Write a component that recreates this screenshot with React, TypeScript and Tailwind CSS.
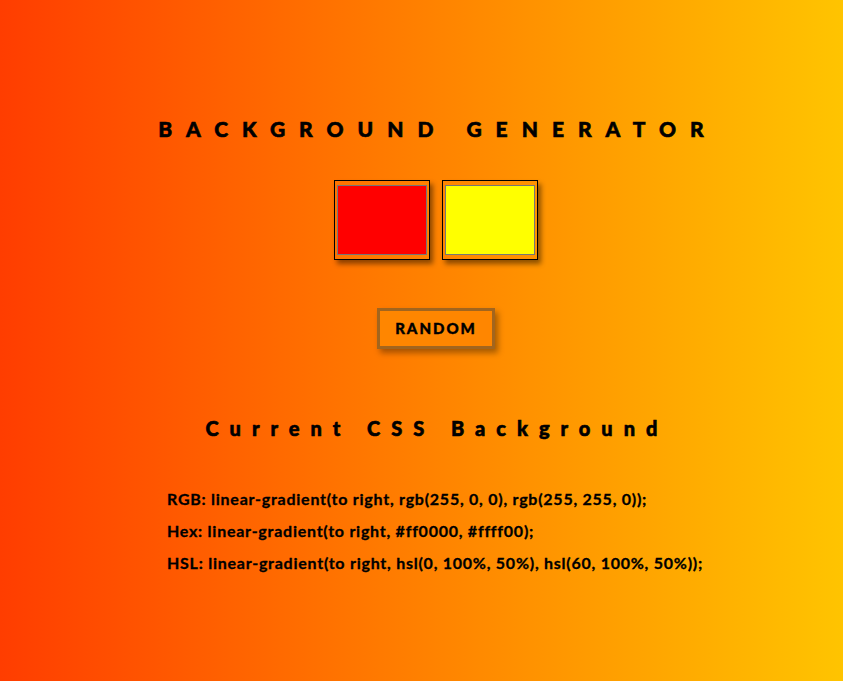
import React from "react";

export default function App() {
  const font = { fontFamily: "Lato, 'Liberation Sans', sans-serif" };
  return (
    <div
      className="w-[843px] h-[681px] bg-[linear-gradient(to_right,#ff3d00,#ffc400)] text-black overflow-hidden"
      style={font}
    >
      <div className="pl-[29px] flex flex-col items-center">
        <h1 className="mt-[115px] text-[21px] leading-[28px] font-black tracking-[14px] uppercase pl-[4px] [-webkit-text-stroke:0.6px_black]">
          Background Generator
        </h1>
        <div className="mt-[37px] flex gap-[12px]">
          <div className="w-[96px] h-[80px] border border-black px-[2px] py-[4px] shadow-[3px_4px_5px_rgba(0,0,0,0.45)]">
            <div className="w-full h-full border border-[#777] bg-[#ff0000]" />
          </div>
          <div className="w-[96px] h-[80px] border border-black px-[2px] py-[4px] shadow-[3px_4px_5px_rgba(0,0,0,0.45)]">
            <div className="w-full h-full border border-[#777] bg-[#ffff00]" />
          </div>
        </div>
        <button className="mt-[48px] w-[118px] h-[41px] border-[3px] border-[#a2651e] bg-[#ff8600] text-[15px] font-black tracking-[2px] shadow-[3px_4px_6px_rgba(0,0,0,0.35)] [-webkit-text-stroke:0.4px_black]">
          RANDOM
        </button>
        <h2 className="mt-[65px] text-[20px] leading-[28px] font-black tracking-[0.55em] pl-[2px] [-webkit-text-stroke:0.6px_black]">
          Current CSS Background
        </h2>
      </div>
      <div className="mt-[47px] ml-[167px] flex flex-col gap-[12px] text-[16px] leading-[20px] font-bold tracking-[0.75px] [-webkit-text-stroke:0.3px_black]">
        <p>RGB: linear-gradient(to right, rgb(255, 0, 0), rgb(255, 255, 0));</p>
        <p>Hex: linear-gradient(to right, #ff0000, #ffff00);</p>
        <p>HSL: linear-gradient(to right, hsl(0, 100%, 50%), hsl(60, 100%, 50%));</p>
      </div>
    </div>
  );
}
